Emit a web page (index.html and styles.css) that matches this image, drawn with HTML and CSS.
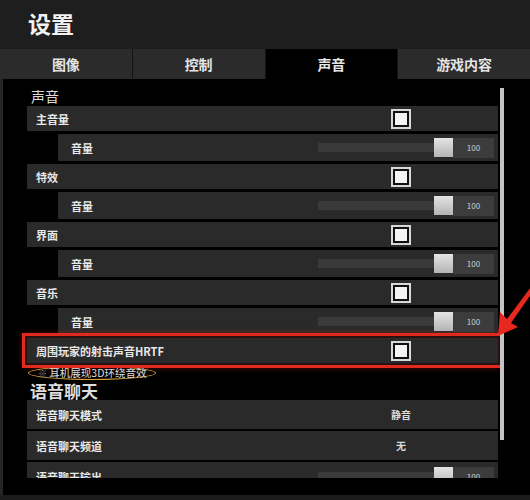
FILE: index.html
```html
<!DOCTYPE html>
<html lang="zh-CN">
<head>
  <meta charset="UTF-8" />
  <title>设置</title>
  <link rel="stylesheet" href="styles.css">
</head>
<body>
  <div class="screen">

    <!-- Title bar -->
    <div class="header"><h1>设置</h1></div>

    <!-- Tabs -->
    <div class="tabs">
      <div class="tab">图像</div>
      <div class="tab">控制</div>
      <div class="tab active">声音</div>
      <div class="tab">游戏内容</div>
    </div>

    <!-- Settings list -->
    <div class="content">
      <div class="list">
        <div class="section">声音</div>

        <div class="row">
          <span class="label">主音量</span>
          <div class="ctrl"><span class="check"><span class="fill"></span></span></div>
        </div>
        <div class="row sub">
          <span class="label">音量</span>
          <div class="slider"><span class="track"><span class="thumb"></span></span><span class="value">100</span></div>
        </div>

        <div class="row">
          <span class="label">特效</span>
          <div class="ctrl"><span class="check"><span class="fill"></span></span></div>
        </div>
        <div class="row sub">
          <span class="label">音量</span>
          <div class="slider"><span class="track"><span class="thumb"></span></span><span class="value">100</span></div>
        </div>

        <div class="row">
          <span class="label">界面</span>
          <div class="ctrl"><span class="check"><span class="fill"></span></span></div>
        </div>
        <div class="row sub">
          <span class="label">音量</span>
          <div class="slider"><span class="track"><span class="thumb"></span></span><span class="value">100</span></div>
        </div>

        <div class="row">
          <span class="label">音乐</span>
          <div class="ctrl"><span class="check"><span class="fill"></span></span></div>
        </div>
        <div class="row sub">
          <span class="label">音量</span>
          <div class="slider"><span class="track"><span class="thumb"></span></span><span class="value">100</span></div>
        </div>

        <div class="row marked">
          <span class="label">周围玩家的射击声音HRTF</span>
          <div class="ctrl"><span class="check"><span class="fill"></span></span></div>
        </div>
        <div class="note"><span class="ring"><span class="mark">※</span> 耳机展现3D环绕音效</span></div>

        <div class="section big">语音聊天</div>

        <div class="row tall">
          <span class="label">语音聊天模式</span>
          <div class="ctrl"><span class="text">静音</span></div>
        </div>
        <div class="row tall">
          <span class="label">语音聊天频道</span>
          <div class="ctrl"><span class="text">无</span></div>
        </div>
        <div class="row tall">
          <span class="label">语音聊天输出</span>
          <div class="slider"><span class="track"><span class="thumb"></span></span><span class="value">100</span></div>
        </div>
      </div>
      <div class="scrollbar"></div>

      <!-- Red annotation arrow -->
      <svg class="arrow" width="40" height="56" viewBox="0 0 40 56">
        <polygon points="3,51 5,27 12,34 36,2 39,5 16,38 23,42" fill="#e8281e"/>
      </svg>
    </div>

    <div class="footer"></div>
  </div>
</body>
</html>
```

FILE: styles.css
```css
body {
  margin: 0;
  background: #000;
  font-family: "Noto Sans CJK SC", "Noto Sans", sans-serif;
  color: #e8e8e8;
}

.screen {
  width: 530px;
  height: 500px;
  overflow: hidden;
  display: flex;
  flex-direction: column;
}

/* Title bar */
.header {
  height: 49px;
  background: #1e1e1e;
  padding-left: 28px;
  box-sizing: border-box;
}

.header h1 {
  margin: 0;
  font-size: 23px;
  line-height: 47px;
  font-weight: bold;
  color: #f2f2f2;
}

/* Tabs */
.tabs {
  display: flex;
  height: 30px;
  gap: 1px;
  background: #141414;
}

.tab {
  flex: 1;
  background: #2b2b2b;
  text-align: center;
  font-size: 14px;
  font-weight: bold;
  line-height: 30px;
  color: #e4e4e4;
}

.tab.active {
  background: #000;
}

/* Content */
.content {
  position: relative;
  height: 416px;
  display: flex;
  background: #000;
  border-left: 3px solid #262626;
}

.list {
  flex: 1;
  height: 399px;
  overflow: hidden;
  padding-left: 24px;
  padding-right: 2px;
}

.section {
  height: 27px;
  padding-top: 7px;
  box-sizing: border-box;
  padding-left: 4px;
  font-size: 14px;
  line-height: 20px;
  color: #dcdcdc;
}

.section.big {
  height: 20px;
  padding-top: 2px;
  padding-left: 3px;
  font-size: 17px;
  font-weight: bold;
  line-height: 18px;
}

.row {
  display: flex;
  align-items: center;
  height: 25px;
  margin-bottom: 3px;
  background: #2a2a2a;
  font-size: 11px;
  font-weight: bold;
}

.row.sub {
  height: 27px;
  margin-left: 31px;
}

.row.tall {
  height: 29px;
  margin-bottom: 2px;
}

.label {
  flex: 1;
  padding-left: 9px;
}

.row.sub .label {
  padding-left: 13px;
}

.ctrl {
  width: 176px;
  margin-right: 4px;
  padding-right: 10px;
  box-sizing: border-box;
  display: flex;
  justify-content: center;
}

.check {
  width: 20px;
  height: 20px;
  box-sizing: border-box;
  padding: 2px;
  border: 2px solid #d8d8d8;
  background: #111;
  display: flex;
}

.check .fill {
  flex: 1;
  background: #f4f4f4;
}

.ctrl .text {
  font-size: 10px;
  color: #dcdcdc;
}

/* Slider */
.slider {
  width: 176px;
  margin-right: 4px;
  display: flex;
  align-items: center;
}

.track {
  flex: 1;
  height: 9px;
  background: #3a3a3a;
  display: flex;
  justify-content: flex-end;
  align-items: center;
}

.thumb {
  width: 19px;
  height: 19px;
  background: linear-gradient(#e4e4e4, #b4b4b4);
}

.value {
  width: 41px;
  height: 20px;
  background: #3c3c3c;
  font-size: 8px;
  font-weight: normal;
  line-height: 20px;
  text-align: center;
  color: #cfcfcf;
}

/* Red highlight */
.row.marked {
  outline: 3px solid #e02a1e;
  outline-offset: 2px;
  box-shadow: 0 0 0 2px #2a1010, 0 0 8px 3px rgba(230, 40, 30, 0.5);
}

.note {
  height: 14px;
  margin-top: 1px;
  font-size: 10.5px;
  line-height: 14px;
}

.ring {
  display: inline-block;
  height: 14px;
  box-sizing: border-box;
  margin-left: 1px;
  padding: 0 9px;
  border: 1.5px solid #d6a13c;
  border-radius: 50%;
  line-height: 11px;
  color: #dedede;
}

.ring .mark {
  color: #8a8a8a;
  font-size: 9px;
}

.scrollbar {
  width: 4px;
  height: 352px;
  margin-top: 9px;
  margin-right: 26px;
  background: #c4c4c4;
}

.arrow {
  position: absolute;
  top: 206px;
  left: 492px;
}

.footer {
  flex: 1;
  background: #1c1c1c;
}
```
